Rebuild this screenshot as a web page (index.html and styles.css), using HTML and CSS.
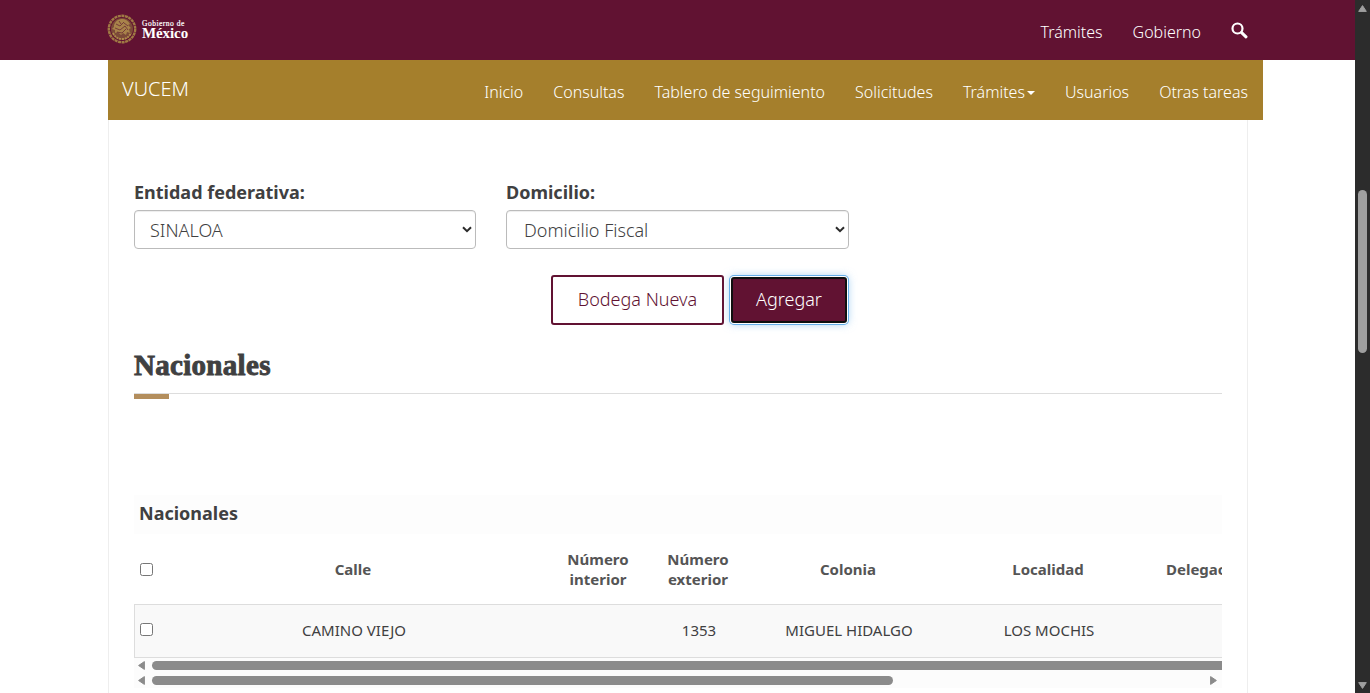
FILE: index.html
```html
<!DOCTYPE html>
<html lang="es">
<head>
<meta charset="utf-8">
<title>VUCEM</title>
<link rel="stylesheet" href="styles.css">
</head>
<body>
<div class="page">
  <header class="gov-bar">
    <div class="gov-brand">
      <svg class="seal" viewBox="0 0 30 30" width="30" height="30">
        <circle cx="15" cy="15" r="13.2" fill="none" stroke="#a07a44" stroke-width="2.4" stroke-dasharray="3 .6"/>
        <circle cx="15" cy="15" r="11" fill="#7c4a38"/>
        <path d="M7 11q2-6 8-6q5 0 8 5l-2 1 3 3-2 1 1 4-3-1-1 3-3-2-2 2-3-3-3 1 0-3-3-1 2-2z" fill="#a8834a"/>
        <path d="M9 10l4 2 4-4M12 7l2 3M8 14l5 2 5-4 3 4M10 18l5 1 4-4M17 9l4 3" fill="none" stroke="#6a2a36" stroke-width=".8"/>
        <path d="M6 19q3 6 9 6t9-6" fill="none" stroke="#b08d4c" stroke-width="1.8" stroke-dasharray="2 .8"/>
      </svg>
      <div class="gov-name"><span class="gov-small">Gobierno de</span><span class="gov-big">México</span></div>
    </div>
    <nav class="gov-links">
      <a>Trámites</a><a>Gobierno</a>
      <svg class="search" viewBox="0 0 17 17" width="17" height="17"><circle cx="6.5" cy="6.5" r="5" fill="none" stroke="#fff" stroke-width="2.2"/><path d="M10.6 10.6L15 14.8" stroke="#fff" stroke-width="3" stroke-linecap="round"/></svg>
    </nav>
  </header>
  <div class="app-bar">
    <span class="app-name">VUCEM</span>
    <nav class="app-links">
      <a>Inicio</a><a>Consultas</a><a>Tablero de seguimiento</a><a>Solicitudes</a><a>Trámites<i class="caret"></i></a><a>Usuarios</a><a>Otras tareas</a>
    </nav>
  </div>
  <main class="content">
    <div class="form-row">
      <div class="field f1"><label>Entidad federativa:</label>
        <div class="select"><span>SINALOA</span><svg viewBox="0 0 10 7" width="10" height="7"><path d="M1 1.2l4 4 4-4" fill="none" stroke="#2b2b2b" stroke-width="2"/></svg></div></div>
      <div class="field f2"><label>Domicilio:</label>
        <div class="select"><span>Domicilio Fiscal</span><svg viewBox="0 0 10 7" width="10" height="7"><path d="M1 1.2l4 4 4-4" fill="none" stroke="#2b2b2b" stroke-width="2"/></svg></div></div>
    </div>
    <div class="actions">
      <button class="btn btn-default"><span>Bodega Nueva</span></button>
      <button class="btn btn-primary"><span>Agregar</span></button>
    </div>
    <h3 class="section-title"><span>Nacionales</span></h3>
    <div class="rule"><div class="rule-mark"></div></div>
    <section class="grid-panel">
      <div class="grid-title"><span>Nacionales</span></div>
      <div class="grid-row grid-head">
        <div class="cell-check"><i class="check"></i></div>
        <div class="cell">Calle</div>
        <div class="cell">Número<br>interior</div>
        <div class="cell">Número<br>exterior</div>
        <div class="cell">Colonia</div>
        <div class="cell">Localidad</div>
        <div class="cell cell-last">Delegación</div>
      </div>
      <div class="grid-row grid-body">
        <div class="cell-check"><i class="check"></i></div>
        <div class="cell">CAMINO VIEJO</div>
        <div class="cell"></div>
        <div class="cell">1353</div>
        <div class="cell">MIGUEL HIDALGO</div>
        <div class="cell">LOS MOCHIS</div>
        <div class="cell"></div>
      </div>
      <div class="hscroll">
        <svg viewBox="0 0 7 9" width="7" height="9"><path d="M6.4.6v7.8L.6 4.5z" fill="#8b8b8b" stroke="#8b8b8b" stroke-linejoin="round"/></svg>
        <div class="thumb thumb-full"></div>
      </div>
      <div class="hscroll">
        <svg viewBox="0 0 7 9" width="7" height="9"><path d="M6.4.6v7.8L.6 4.5z" fill="#8b8b8b" stroke="#8b8b8b" stroke-linejoin="round"/></svg>
        <div class="thumb thumb-part"></div>
        <svg class="arrow-end" viewBox="0 0 7 9" width="7" height="9"><path d="M.6.6v7.8l5.8-3.9z" fill="#8b8b8b" stroke="#8b8b8b" stroke-linejoin="round"/></svg>
      </div>
    </section>
  </main>
</div>
<aside class="vscroll">
  <svg viewBox="0 0 9 7" width="9" height="7"><path d="M.7 6.4h7.6L4.5.6z" fill="#9f9f9f" stroke="#9f9f9f" stroke-linejoin="round"/></svg>
  <div class="vthumb"></div>
  <svg class="down" viewBox="0 0 9 7" width="9" height="7"><path d="M.7.6h7.6L4.5 6.4z" fill="#9f9f9f" stroke="#9f9f9f" stroke-linejoin="round"/></svg>
</aside>
</body>
</html>
```
FILE: styles.css
```css
* { box-sizing: border-box; }
body {
  margin: 0;
  height: 693px;
  display: flex;
  overflow: hidden;
  font-family: "Noto Sans", sans-serif;
  color: #404041;
  background: #fff;
}
.page { width: 1355px; height: 693px; overflow: hidden; display: flex; flex-direction: column; }
.gov-bar {
  height: 60px; flex: none; background: #611232; color: #fff;
  padding: 0 107px;
  display: flex; justify-content: space-between;
}
.gov-brand { display: flex; gap: 5px; padding-top: 14px; }
.gov-name { display: flex; flex-direction: column; font-family: "Liberation Serif", serif; font-weight: bold; padding-top: 5px; }
.gov-small { font-size: 7.5px; line-height: 9px; letter-spacing: .5px; font-weight: normal; -webkit-text-stroke: .2px #fff; }
.gov-big { font-size: 15px; line-height: 11px; letter-spacing: -.1px; }
.gov-links { display: flex; gap: 30px; font-size: 16px; line-height: 24px; padding-top: 20px; font-weight: 300; }
.search { margin-top: 2px; }
.app-bar {
  flex: none; width: 1155px; height: 60px; margin-left: 108px; padding: 0 15px 0 14px;
  background: #a57f2c; color: #fff;
  display: flex; justify-content: space-between;
}
.app-name { font-size: 20px; line-height: 28px; padding-top: 15px; font-weight: 300; }
.app-links { display: flex; gap: 30px; font-size: 16px; line-height: 24px; padding-top: 20px; font-weight: 300; white-space: nowrap; }
.caret { display: inline-block; border: 4px solid transparent; border-top-color: #fff; border-bottom: 0; margin-left: 2px; vertical-align: 3px; }
.content { flex: 1; width: 1140px; margin-left: 108px; padding: 60px 25px 0; border: solid #eee; border-width: 0 1px; }
.form-row { display: flex; gap: 30px; height: 95px; }
.field { width: 342px; }
.f2 { width: 343px; }
.field label { display: block; font-size: 18px; line-height: 25px; font-weight: bold; margin-bottom: 5px; }
.select {
  height: 39px; border: 1px solid #bbb; border-radius: 4px; padding: 0 3px 0 15px;
  display: flex; align-items: center; justify-content: space-between;
  font-size: 18px; font-weight: 300; box-shadow: inset 0 1px 1px rgba(0,0,0,.075);
}
.f2 .select { padding-left: 17px; }
.actions { display: flex; gap: 7px; margin-left: 417px; height: 50px; }
.btn { font-family: inherit; font-size: 18px; font-weight: 300; padding: 0 0 2px; border-radius: 3px; }
.btn-default { width: 173px; height: 50px; border: 2px solid #611232; color: #611232; background: #fff; }
.btn-primary {
  width: 116px; height: 46px; margin-top: 2px; background: #611232; color: #fff; border: 2px solid #101010;
  box-shadow: 0 0 0 1px #fff, 0 0 0 2px #66afe9, 0 0 8px 1px rgba(102,175,233,.6);
}
.section-title { margin: 23px 0 0; font-family: "Liberation Serif", serif; font-size: 29px; line-height: 34px; height: 45px; font-weight: bold; letter-spacing: .3px; -webkit-text-stroke: .9px #404041; }
.rule { height: 6px; border-top: 1px solid #ddd; }
.rule-mark { width: 35px; height: 5px; background: #b38e5d; }
.grid-panel { margin-top: 96px; overflow: hidden; background: #fdfdfd; }
.grid-title { height: 39px; padding: 6px 5px 0; font-size: 18px; line-height: 25px; font-weight: bold; }
.grid-row { display: grid; grid-template-columns: 24px 390px 100px 100px 200px 200px 200px; align-items: center; text-align: center; }
.grid-head { height: 70px; background: #fff; color: #555; font-size: 15px; line-height: 20px; font-weight: bold; }
.cell-last { text-align: left; padding-left: 18px; }
.grid-body { height: 54px; margin-right: -130px; padding-bottom: 2px; background: #f9f9f9; border: 1px solid #ddd; font-size: 15px; }
.cell-check { display: flex; padding-left: 6px; }
.check { flex: none; width: 13px; height: 13px; border: 1px solid #767676; border-radius: 2.5px; background: #fff; }
.grid-body .check { margin-left: -1px; margin-top: -2px; }
.hscroll { height: 15px; display: flex; align-items: center; padding-left: 4px; background: #fcfcfc; }
.hscroll svg { flex: none; }
.thumb { height: 9px; margin-left: 7px; flex: none; background: #8b8b8b; border-radius: 5px; }
.thumb-full { width: 1200px; }
.thumb-part { width: 741px; }
.hscroll .arrow-end { margin-left: auto; margin-right: 5px; }
.vscroll { width: 15px; height: 693px; background: #2c2c2c; display: flex; flex-direction: column; align-items: center; padding: 5px 0 4px; }
.vthumb { width: 9px; height: 163px; margin-top: 178px; border-radius: 5px; background: #9f9f9f; }
.down { margin-top: auto; }
```
